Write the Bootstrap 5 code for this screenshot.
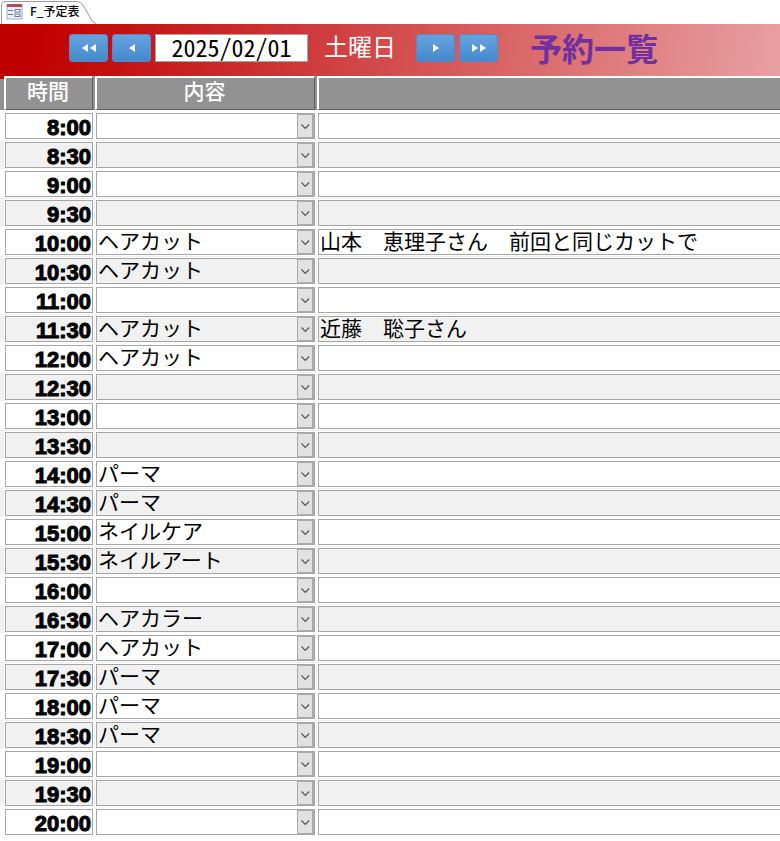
<!DOCTYPE html>
<html lang="ja">
<head>
<meta charset="utf-8">
<meta name="viewport" content="width=device-width, initial-scale=1">
<title>F_予定表</title>
<link href="https://cdn.jsdelivr.net/npm/bootstrap@5.3.0/dist/css/bootstrap.min.css" rel="stylesheet">
<style>
body{font-family:"Noto Sans CJK JP",sans-serif;color:#000;background:#fff;overflow-x:hidden}
.doc-tabs{height:24px}
.doc-tab{width:96px;height:24px;font-size:12px;line-height:22px;padding-left:30px}
.tab-shape{left:0;top:0}
.form-head{height:52px;padding:10px 0 0 69px;background:linear-gradient(100deg,#c00000 5%,#e8a0a2 100%)}
.nav-btn{width:39px;height:28px;border:1px solid #5b86c4;border-radius:3px;background:linear-gradient(#67a3de,#4389cc)}
.nav-btn svg{display:block;margin:0 auto}
.date-box{width:153px;height:28px;border:1px solid #a6a6a6;border-radius:0;font-size:24px;line-height:24px;padding:0 0 3px;font-feature-settings:"hwid"}
.weekday{font-size:24px;line-height:24px;width:72px}
.form-title{font-size:32px;line-height:26px;font-weight:700;color:#7030a0}
.plan{table-layout:fixed;border-collapse:separate;border-spacing:0}
.plan th{height:35px;padding:0 2px 0 0;background:#929292;border-bottom:1px solid #fff;font-size:21px;line-height:24px;font-weight:500;color:#fff;text-align:center}
.plan th>div{height:34px;border:solid;border-width:2px 1px 1px 2px;border-color:#fff #606060 #606060 #fff;padding-right:2px}
.plan td{height:29px;padding:2px 2px 1px 1px}
.plan tbody tr:nth-child(even){background:#f1f1f1}
.plan .edge{padding:0}
.plan .edge-top{border-top:3px solid #c00000}
.cell-box{display:block;width:100%;height:26px;border:1px solid #a6a6a6;border-radius:0;background:transparent;color:#000;box-shadow:0 0 0 1px #fff}
.time-box{font-family:"Liberation Sans",Arial,sans-serif;font-weight:700;font-size:22px;line-height:24px;padding:2px 1px 0 0;text-align:right;-webkit-text-stroke:1px #000}
.text-box{font-family:"Noto Sans CJK JP",sans-serif;font-size:21px;line-height:20px;padding:0 1px 4px}
.pick{appearance:none;background:no-repeat right center/17px 24px url("data:image/svg+xml,%3Csvg xmlns='http://www.w3.org/2000/svg' viewBox='0 0 17 24'%3E%3Crect x='.5' y='.5' width='16' height='23' fill='%23e1e1e1' stroke='%23aaa'/%3E%3Cpath d='M16 0v24' stroke='%23aaa' stroke-width='2'/%3E%3Cpath d='M4.500 10.500l3.800 3.800 3.800-3.800' fill='none' stroke='%23555' stroke-width='1.200'/%3E%3C/svg%3E")}
</style>
<script src="https://cdn.jsdelivr.net/npm/bootstrap@5.3.0/dist/js/bootstrap.bundle.min.js"></script>
</head>
<body>
<header>
<div class="doc-tabs d-flex">
<div class="doc-tab position-relative text-nowrap">
<svg class="tab-shape position-absolute" width="96" height="24" viewBox="0 0 96 24" aria-hidden="true">
<path d="M1.500 24V5Q1.500 1.500 5 1.500H77Q81 1.500 83 5L91 19Q93 23 96 23.500" fill="none" stroke="#999"/>
<rect x="7" y="5" width="15" height="14" fill="#eef1f7" stroke="#8f9bb5" stroke-width=".8"/><rect x="7" y="4" width="15" height="3" fill="#b04a5a"/>
<path d="M8 10.500h5M8 14.500h5" stroke="#6679a8"/><rect x="15" y="9.500" width="5" height="2.500" fill="#fff" stroke="#6679a8"/><rect x="15" y="14" width="5" height="2.500" fill="#fff" stroke="#6679a8"/>
</svg>
<span class="position-relative fw-medium">F_予定表</span>
</div>
</div>
<div class="form-head d-flex align-items-start">
<div class="d-flex gap-1 flex-shrink-0">
<button type="button" class="nav-btn p-0" aria-label="前の週"><svg width="18" height="10" viewBox="0 0 18 10" fill="#fff"><path d="M8 1v8L2 5zM16 1v8l-6-4z"/></svg></button>
<button type="button" class="nav-btn p-0" aria-label="前の日"><svg width="18" height="10" viewBox="0 0 18 10" fill="#fff"><path d="M12 1v8L6 5z"/></svg></button>
<input class="date-box text-center" type="text" value="2025/02/01" aria-label="日付">
</div>
<span class="weekday text-white text-nowrap ms-3">土曜日</span>
<div class="d-flex gap-1 ms-3 ps-1">
<button type="button" class="nav-btn p-0" aria-label="次の日"><svg width="18" height="10" viewBox="0 0 18 10" fill="#fff"><path d="M6 1v8l6-4z"/></svg></button>
<button type="button" class="nav-btn p-0" aria-label="次の週"><svg width="18" height="10" viewBox="0 0 18 10" fill="#fff"><path d="M2 1v8l6-4zM10 1v8l6-4z"/></svg></button>
</div>
<h1 class="form-title text-nowrap mb-0 ms-4 ps-2">予約一覧</h1>
</div>
</header>
<main>
<table class="plan w-100">
<colgroup><col style="width:4px"><col style="width:91px"><col style="width:222px"><col></colgroup>
<thead><tr><th class="edge edge-top"></th><th scope="col"><div>時間</div></th><th scope="col"><div>内容</div></th><th scope="col" class="pe-0" aria-label="備考"><div class="border-end-0"></div></th></tr></thead>
<tbody id="rows"></tbody>
</table>
</main>
<script>
const plans={"10:00":["ヘアカット","山本　恵理子さん　前回と同じカットで"],"10:30":["ヘアカット"],"11:30":["ヘアカット","近藤　聡子さん"],"12:00":["ヘアカット"],"14:00":["パーマ"],"14:30":["パーマ"],"15:00":["ネイルケア"],"15:30":["ネイルアート"],"16:30":["ヘアカラー"],"17:00":["ヘアカット"],"17:30":["パーマ"],"18:00":["パーマ"],"18:30":["パーマ"]};
let html="";
for(let m=480;m<=1200;m+=30){
const t=Math.floor(m/60)+":"+String(m%60).padStart(2,"0");
const [menu="",note=""]=plans[t]||[];
html+=`<tr><td class="edge"></td><td><div class="cell-box time-box">${t}</div></td><td><select class="cell-box text-box pick" aria-label="${t} 内容"><option>${menu}</option></select></td><td class="pe-0"><input class="cell-box text-box border-end-0" type="text" aria-label="${t} 備考" value="${note}"></td></tr>`;
}
document.getElementById("rows").innerHTML=html;
</script>
</body>
</html>
